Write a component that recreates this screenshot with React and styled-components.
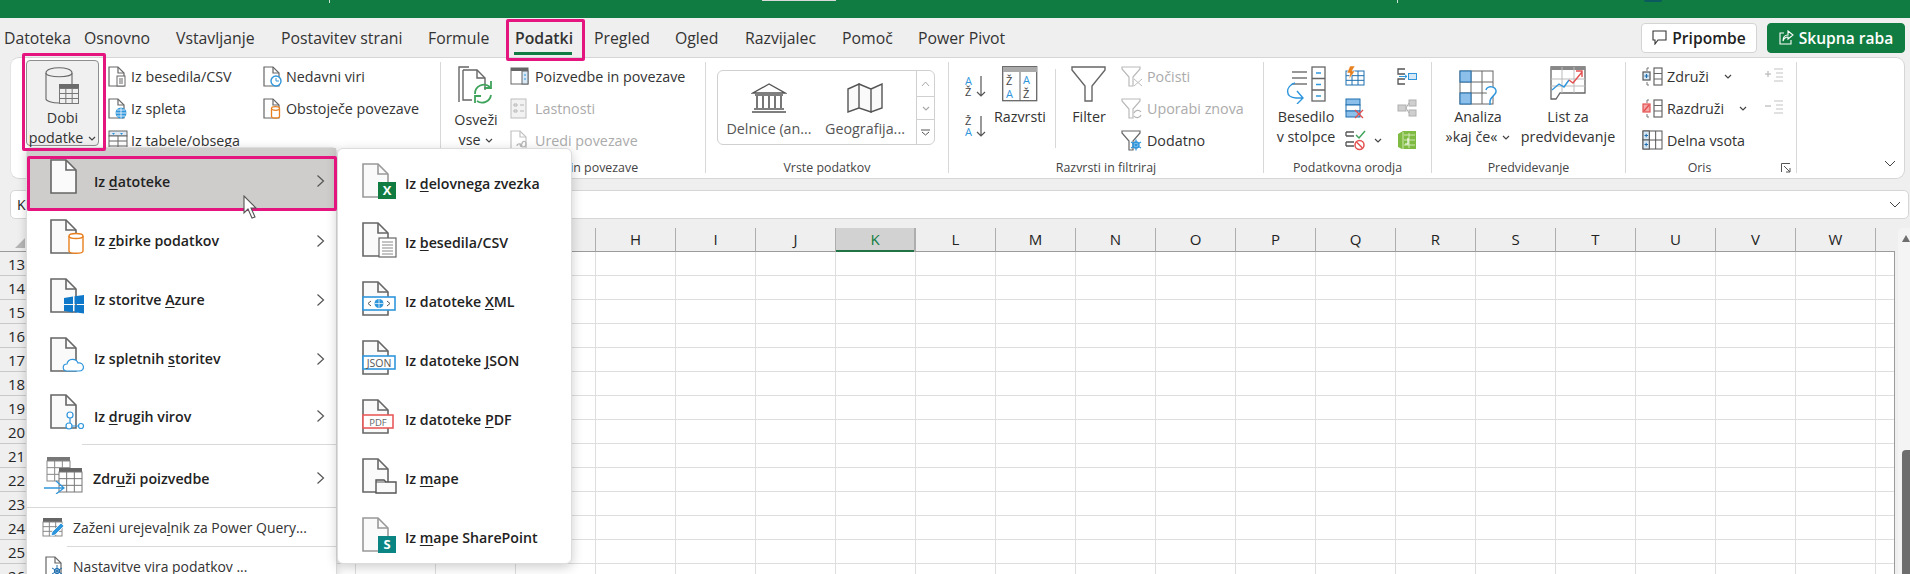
import React from "react";
import styled, { createGlobalStyle } from "styled-components";

const INK = "#262626";
const LINE = "#666";
const BLUE = "#2f96dc";
const PINK = "#e5157f";

const Global = createGlobalStyle`
  html, body { margin: 0; padding: 0; background: #efefef; overflow: hidden; }
  * { box-sizing: border-box; }
  svg { display: block; flex: none; }
`;

const Ico = ({ w, h, children }) => (
  <svg width={w} height={h} viewBox={`0 0 ${w} ${h}`} fill="none">{children}</svg>
);

const SmallDoc = ({ c = LINE }) => (
  <>
    <path d="M1 1h9l6 6v13H1z" stroke={c} strokeWidth="1.2" fill="#fff" />
    <path d="M10 1v6h6" stroke={c} strokeWidth="1.2" />
  </>
);

const BigDoc = ({ c = LINE, fill = "#fafafa" }) => (
  <>
    <path d="M1 1h15l10 10v23H1z" stroke={c} strokeWidth="1.6" fill={fill} />
    <path d="M16 1v10h10" stroke={c} strokeWidth="1.6" />
  </>
);

const Chev = ({ c = "#444" }) => (
  <svg width="8" height="5" viewBox="0 0 8 5" fill="none"><path d="M1 1l3 3 3-3" stroke={c} strokeWidth="1.2" /></svg>
);

const Grid3 = ({ x, y, w, h, cols, rows, c = "#666", fill = "#fff" }) => (
  <>
    <rect x={x} y={y} width={w} height={h} stroke={c} fill={fill} />
    {Array.from({ length: cols - 1 }, (_, i) => (
      <path key={i} d={`M${x + ((i + 1) * w) / cols} ${y}v${h}`} stroke={c} />
    ))}
    {Array.from({ length: rows - 1 }, (_, i) => (
      <path key={i} d={`M${x} ${y + ((i + 1) * h) / rows}h${w}`} stroke={c} />
    ))}
  </>
);

/* ribbon icons */
const DbIcon = () => (
  <Ico w={36} h={38}>
    <path d="M1 6v26c0 2 6 4 13 4" stroke={LINE} strokeWidth="1.1" />
    <path d="M1 6c0-7 26-7 26 0v11" stroke={LINE} strokeWidth="1.1" />
    <path d="M1 6c0 5 26 5 26 0" stroke={LINE} strokeWidth="1.1" />
    <rect x="14" y="17" width="20" height="5" fill="#6b6b6b" />
    <Grid3 x={14.5} y={21.5} w={19} h={15} cols={3} rows={3} c="#777" fill="#f0f0f0" />
  </Ico>
);
const CsvIcon = () => (
  <Ico w={18} h={21}><SmallDoc />
    <rect x="9" y="10" width="8" height="10" fill="#fff" stroke={LINE} />
    <path d="M11 13h4M11 15h4M11 17h4" stroke={LINE} />
  </Ico>
);
const WebIcon = () => (
  <Ico w={19} h={21}><SmallDoc />
    <circle cx="13" cy="15" r="5.5" fill={BLUE} />
    <path d="M7.5 15h11M13 9.5v11M9 12h8M9 18h8" stroke="#fff" strokeWidth=".8" />
  </Ico>
);
const TableIcon = () => (
  <Ico w={20} h={21}>
    <rect x="1" y="1" width="18" height="5" fill="#dfeaf5" stroke={LINE} />
    <path d="M4 3h3l-1.500 2zM12 3h3l-1.500 2z" fill={BLUE} />
    <Grid3 x={1} y={6} w={18} h={15} cols={2} rows={3} />
  </Ico>
);
const ClockIcon = () => (
  <Ico w={19} h={21}><SmallDoc />
    <circle cx="13" cy="15" r="5" fill="#fff" stroke={BLUE} strokeWidth="1.4" />
    <path d="M13 12v3h3" stroke={BLUE} />
  </Ico>
);
const ConnIcon = () => (
  <Ico w={19} h={21}><SmallDoc />
    <path d="M8.500 10.500v8c0 2 8 2 8 0v-8" stroke="#e8801f" strokeWidth="1.3" fill="#fff" />
    <ellipse cx="12.500" cy="10.500" rx="4" ry="1.800" stroke="#e8801f" strokeWidth="1.300" fill="#fff" />
  </Ico>
);
const RefreshIcon = () => (
  <Ico w={36} h={38}>
    <path d="M1 36V1h10" stroke={LINE} strokeWidth="1.4" />
    <path d="M5 4h14l8 8v12M5 4v30h9" stroke={LINE} strokeWidth="1.4" />
    <path d="M19 4v8h8" stroke={LINE} strokeWidth="1.4" />
    <path d="M17 28a9 9 0 0 1 15-7M33 29a9 9 0 0 1-14 6" stroke="#3fa35c" strokeWidth="1.800" />
    <path d="M33 15v7h-7M17 37v-7h6" stroke="#3fa35c" strokeWidth="1.800" />
  </Ico>
);
const QueriesIcon = () => (
  <Ico w={19} h={18}>
    <rect x="1" y="1" width="17" height="16" stroke={LINE} fill="#fff" />
    <rect x="1" y="1" width="17" height="3" fill={LINE} />
    <rect x="12" y="4" width="6" height="13" fill="#d6e8f6" stroke={LINE} />
    <path d="M15 7v2M15 11v2" stroke={BLUE} />
  </Ico>
);
const PropsIcon = () => (
  <Ico w={17} h={21}>
    <rect x="1" y="1" width="15" height="19" stroke="#bdbdbd" fill="#f2f2f2" />
    <path d="M4 6h3v2H4zM4 12h3v2H4zM10 7h4M10 13h4" stroke="#b5b5b5" />
  </Ico>
);
const EditLinksIcon = () => (
  <Ico w={18} h={21}><SmallDoc c="#c2c2c2" />
    <path d="M7 16c0-3 5-3 5 0M10 14c0 4 6 4 6 0s-4-3-4 0" stroke="#b8b8b8" strokeWidth="1.200" />
  </Ico>
);
const BankIcon = () => (
  <Ico w={36} h={30}>
    <path d="M18 1L2 10h32zM4 12h28M3 26h30M1 29h34" stroke="#555" strokeWidth="1.400" />
    <path d="M6 13v12M12 13v12M18 13v12M24 13v12M30 13v12" stroke="#555" strokeWidth="1.600" />
  </Ico>
);
const MapIcon = () => (
  <Ico w={36} h={30}>
    <path d="M1 6l11-5v24L1 29zM12 1l12 5v23l-12-4zM24 6l11-5v24l-11 4z" stroke="#555" strokeWidth="1.400" fill="#fafafa" />
  </Ico>
);
const Letters = ({ top, bottom, x, topC, botC }) => (
  <g fontFamily="Open Sans, sans-serif" fontSize="11">
    <text x={x} y="10" fill={topC}>{top}</text>
    <text x={x} y="21" fill={botC}>{bottom}</text>
  </g>
);
const SortAZ = () => (
  <Ico w={22} h={23}>
    <Letters top="A" bottom="Ž" x={0} topC={BLUE} botC="#444" />
    <path d="M16 1v20M12 17l4 4 4-4" stroke="#555" strokeWidth="1.200" />
  </Ico>
);
const SortZA = () => (
  <Ico w={22} h={23}>
    <Letters top="Ž" bottom="A" x={0} topC="#444" botC={BLUE} />
    <path d="M16 1v20M12 17l4 4 4-4" stroke="#555" strokeWidth="1.200" />
  </Ico>
);
const SortBig = () => (
  <Ico w={36} h={36}>
    <rect x=".7" y=".7" width="34" height="34" stroke="#666" strokeWidth="1.300" fill="#fff" />
    <rect x="1" y="1" width="34" height="5" fill="#aaa" />
    <path d="M18 6v29" stroke="#666" />
    <g fontFamily="Open Sans, sans-serif" fontSize="11">
      <text x="4" y="19" fill="#444">Ž</text>
      <text x="4" y="32" fill={BLUE}>A</text>
      <text x="21" y="18" fill={BLUE}>A</text>
      <text x="21" y="32" fill="#444">Ž</text>
    </g>
  </Ico>
);
const FilterIcon = () => (
  <Ico w={36} h={36}>
    <path d="M1 1h33v3L21 20v15h-7V20L1 4z" stroke="#666" strokeWidth="1.400" fill="#fff" />
  </Ico>
);
const FilterSm = ({ c }) => <path d="M1 1h18v2l-7 8v9h-4v-9L1 3z" stroke={c} strokeWidth="1.200" fill="#fff" />;
const FilterClear = () => (
  <Ico w={22} h={21}><FilterSm c="#b9b9b9" />
    <path d="M13 13l8 7M21 13l-8 7" stroke="#bdbdbd" />
  </Ico>
);
const FilterAgain = () => (
  <Ico w={22} h={21}><FilterSm c="#b9b9b9" />
    <path d="M13 15a4 4 0 0 1 7-1M20 17a4 4 0 0 1-7 1" stroke="#b5b5b5" strokeWidth="1.200" />
  </Ico>
);
const FilterAdv = () => (
  <Ico w={22} h={21}><FilterSm c="#666" />
    <circle cx="15" cy="15" r="3" stroke={BLUE} strokeWidth="1.400" />
    <path d="M15 9.500v11M10 12l10 6M10 18l10-6" stroke={BLUE} strokeWidth="1.200" />
  </Ico>
);
const TextColsIcon = () => (
  <Ico w={40} h={38}>
    <path d="M6 6h15M6 12h15M6 18h15" stroke="#777" strokeWidth="1.300" />
    <rect x="26" y="1" width="13" height="34" stroke="#666" strokeWidth="1.300" fill="#fff" />
    <path d="M26 12.500h13M26 24h13" stroke="#666" strokeWidth="1.300" />
    <path d="M30 7h5M30 18.500h5M30 30h5" stroke={BLUE} strokeWidth="1.300" />
    <path d="M9 17C-1 20-1 32 10 32h6M11 25l6 7-6 6" stroke={BLUE} strokeWidth="1.400" />
  </Ico>
);
const FlashIcon = () => (
  <Ico w={20} h={20}>
    <Grid3 x={1} y={5} w={18} h={14} cols={3} rows={3} c="#1f6fb0" />
    <path d="M5 0h5L7 5h3l-6 8 1-6H2z" fill="#e8801f" stroke="#fff" strokeWidth=".5" />
  </Ico>
);
const DupIcon = () => (
  <Ico w={20} h={21}>
    <rect x="1" y="1" width="14" height="6" fill="#8cc0ea" stroke="#1f6fb0" />
    <rect x="1" y="7" width="14" height="6" fill="#fff" stroke="#1f6fb0" />
    <rect x="1" y="13" width="14" height="6" fill="#8cc0ea" stroke="#1f6fb0" />
    <path d="M10 12l8 8M18 12l-8 8" stroke="#e4504f" strokeWidth="1.300" />
  </Ico>
);
const ValidIcon = () => (
  <Ico w={21} h={21}>
    <path d="M1 2h8M1 6h8M1 2v4M1 12h8M1 16h8M1 12v4" stroke="#555" strokeWidth="1.300" />
    <path d="M11 5l3 3 6-7" stroke="#3fa35c" strokeWidth="1.500" />
    <circle cx="14.500" cy="15" r="4.500" stroke="#e4504f" strokeWidth="1.500" fill="#fff" />
    <path d="M11.500 12l6 6" stroke="#e4504f" strokeWidth="1.500" />
  </Ico>
);
const ConsolidateIcon = () => (
  <Ico w={20} h={17}>
    <path d="M8 1H1v5h7M8 11H1v5h7" stroke="#555" strokeWidth="1.300" />
    <path d="M2 8.500h8M7 6l3 2.500L7 11" stroke={BLUE} />
    <rect x="11.500" y="5.500" width="8" height="6" fill="#d6e8f6" stroke={BLUE} />
  </Ico>
);
const RelationsIcon = () => (
  <Ico w={20} h={18}>
    <rect x="1" y="6" width="8" height="6" fill="#cfcfcf" stroke="#b0b0b0" />
    <rect x="12" y="1" width="7" height="6" fill="#cfcfcf" stroke="#b0b0b0" />
    <rect x="12" y="11" width="7" height="6" fill="#cfcfcf" stroke="#b0b0b0" />
    <path d="M9 9l3-5M9 9l3 5" stroke="#b0b0b0" />
  </Ico>
);
const ModelIcon = () => (
  <Ico w={20} h={20}>
    <path d="M1 4l5-3h13v18H5l-4-2z" fill="#7fba42" />
    <path d="M7 5h11M7 10h11M7 15h11M12 3v15M6 2v17" stroke="#d9eebf" strokeWidth=".9" />
    <path d="M8 14h3v-6" stroke="#fff" strokeWidth="1.200" />
  </Ico>
);
const WhatIfIcon = () => (
  <Ico w={39} h={36}>
    <Grid3 x={1} y={1} w={33} h={33} cols={3} rows={3} c="#666" />
    <rect x="1" y="1" width="11" height="11" fill="#8cc0ea" stroke="#1f6fb0" />
    <rect x="1" y="23" width="11" height="11" fill="#8cc0ea" stroke="#1f6fb0" />
    <path d="M27 20c1-5 11-4 10 2-1 4-5 4-6 9v4" stroke={BLUE} strokeWidth="1.500" fill="#fff" />
  </Ico>
);
const ForecastIcon = () => (
  <Ico w={36} h={34}>
    <path d="M1 1h34v26H10l-4 6H1z" stroke="#666" strokeWidth="1.300" fill="#fff" />
    <rect x="1" y="1" width="34" height="3" fill="#888" />
    <path d="M1 13h34M1 20h34M12 1v26M24 1v26" stroke="#bbb" />
    <path d="M2 24l7-6 5 3 5-7" stroke={BLUE} strokeWidth="1.400" />
    <path d="M19 14l4 3 9-11M26 5h6v6" stroke="#e4504f" strokeWidth="1.400" />
  </Ico>
);
const GroupSm = ({ red }) => (
  <Ico w={21} h={19}>
    <rect x="1" y="5" width="7" height="8" fill={red ? "#f3a8a8" : "#d6e8f6"} stroke={red ? "#e4504f" : "#555"} strokeWidth="1.200" />
    {red
      ? <path d="M2 12l5-6" stroke="#e4504f" strokeWidth="1.400" />
      : <path d="M2.500 9h4M4.500 7v4" stroke="#1f6fb0" strokeWidth="1.200" />}
    <path d="M7 1H5v3M7 18H5v-3" stroke="#777" />
    <rect x="12" y="1" width="8" height="17" stroke="#666" strokeWidth="1.200" fill="#fff" />
    <path d="M12 6.500h8M12 12h8" stroke="#666" />
  </Ico>
);
const SubtotalIcon = () => (
  <Ico w={21} h={20}>
    <Grid3 x={1} y={1} w={19} h={18} cols={3} rows={2} c="#555" />
    <rect x="1" y="1" width="6.300" height="9" fill="#d6e8f6" stroke="#555" />
    <rect x="1" y="10" width="6.300" height="9" fill="#d6e8f6" stroke="#555" />
    <path d="M2.500 5.500h3.500M4.200 3.800v3.500M2.500 14.500h3.500M4.200 12.800v3.500" stroke="#1f6fb0" />
  </Ico>
);
const OutlineSm = ({ plus }) => (
  <Ico w={20} h={16}>
    <path d="M1 6h6" stroke="#bdbdbd" strokeWidth="1.300" />
    {plus && <path d="M4 3v6" stroke="#bdbdbd" strokeWidth="1.300" />}
    <path d="M10 1h9M12 5h7M12 9h7M10 13h9" stroke="#c4c4c4" strokeWidth="1.200" />
  </Ico>
);
const CommentIcon = () => (
  <Ico w={15} h={15}><path d="M1 1h13v9H6l-3 4v-4H1z" stroke="#333" strokeWidth="1.100" /></Ico>
);
const ShareIcon = () => (
  <Ico w={15} h={15}>
    <path d="M5 3H1v11h11v-4" stroke="#fff" strokeWidth="1.100" />
    <path d="M9 1l5 4-5 4V7C7 7 5 8 4 11c0-4 2-6 5-6z" stroke="#fff" strokeWidth="1.100" />
  </Ico>
);

/* menu icons */
const MenuSlot = ({ children }) => <Ico w={36} h={37}>{children}</Ico>;
const M = {
  file: () => <MenuSlot><BigDoc /></MenuSlot>,
  db: () => (
    <MenuSlot><BigDoc />
      <path d="M19 17v15c0 3 14 3 14 0V17" stroke="#e8801f" strokeWidth="1.400" fill="#fff" />
      <ellipse cx="26" cy="17" rx="7" ry="2.500" stroke="#e8801f" strokeWidth="1.400" fill="#fff" />
    </MenuSlot>
  ),
  azure: () => (
    <MenuSlot><BigDoc />
      <path d="M14 20l9-1.500V26h-9zM24.500 18.200L34 17v9h-9.500zM14 27h9v7.500l-9-1.500zM24.500 27H34v8.500l-9.500-1.300z" fill="#0f78c9" />
    </MenuSlot>
  ),
  cloud: () => (
    <MenuSlot><BigDoc />
      <path d="M17 34c-5 0-5-7 0-7 1-6 9-6 11-1 6-1 8 8 1 8z" stroke={BLUE} strokeWidth="1.200" fill="#fff" />
    </MenuSlot>
  ),
  other: () => (
    <MenuSlot><BigDoc />
      <circle cx="20" cy="21" r="3" stroke={BLUE} strokeWidth="1.200" fill="#fff" />
      <circle cx="19" cy="32" r="3" stroke={BLUE} strokeWidth="1.200" fill="#fff" />
      <circle cx="31" cy="32" r="2.500" stroke={BLUE} strokeWidth="1.200" fill="#fff" />
      <path d="M20 24v5M22 32h6.500" stroke={BLUE} strokeWidth="1.200" />
    </MenuSlot>
  ),
  combine: () => (
    <Ico w={40} h={38}>
      <rect x="3" y="1" width="23" height="4" fill="#777" />
      <Grid3 x={3} y={5} w={23} h={20} cols={3} rows={3} c="#888" />
      <rect x="15" y="12" width="23" height="4" fill="#666" />
      <Grid3 x={15} y={16} w={23} h={20} cols={3} rows={3} c="#777" />
      <path d="M0 32h19M12 25l8 7-8 6" stroke={BLUE} strokeWidth="1.300" fill="none" />
    </Ico>
  ),
  xlsx: () => (
    <MenuSlot><BigDoc c="#999" />
      <rect x="16" y="19" width="18" height="17" fill="#107c41" />
      <text x="25" y="32" fill="#fff" fontSize="13" fontWeight="700" textAnchor="middle" fontFamily="Open Sans, sans-serif">X</text>
    </MenuSlot>
  ),
  csv: () => (
    <MenuSlot><BigDoc />
      <rect x="17" y="16" width="17" height="19" fill="#fff" stroke={LINE} strokeWidth="1.200" />
      <path d="M20 20h11M20 23h11M20 26h11M20 29h11M20 32h11" stroke="#888" />
    </MenuSlot>
  ),
  xml: () => (
    <MenuSlot><BigDoc />
      <rect x="1" y="16" width="32" height="13" fill="#fff" stroke={BLUE} strokeWidth="1.600" />
      <circle cx="17" cy="22.500" r="4.500" fill={BLUE} />
      <path d="M12.500 22.500h9M17 18v9" stroke="#fff" strokeWidth=".7" />
      <path d="M9 20l-3 2.500L9 25M25 20l3 2.500L25 25" stroke="#555" />
    </MenuSlot>
  ),
  json: () => (
    <MenuSlot><BigDoc />
      <rect x="1" y="16" width="32" height="13" fill="#fff" stroke={BLUE} strokeWidth="1.600" />
      <text x="17" y="27" fill="#555" fontSize="10.500" textAnchor="middle" fontFamily="Open Sans, sans-serif">JSON</text>
    </MenuSlot>
  ),
  pdf: () => (
    <MenuSlot><BigDoc />
      <rect x="1" y="16" width="30" height="13" fill="#fff" stroke="#ea5a5a" strokeWidth="1.600" />
      <text x="16" y="26.500" fill="#666" fontSize="9.500" textAnchor="middle" fontFamily="Open Sans, sans-serif">PDF</text>
    </MenuSlot>
  ),
  folder: () => (
    <MenuSlot><BigDoc />
      <path d="M14 35V22h8l2 2h10v11z" fill="#fafafa" stroke="#555" strokeWidth="1.400" />
      <path d="M14 24h10" stroke="#555" />
    </MenuSlot>
  ),
  sp: () => (
    <MenuSlot><BigDoc c="#999" />
      <rect x="16" y="19" width="18" height="17" fill="#0b8484" />
      <text x="25" y="32" fill="#fff" fontSize="13" fontWeight="700" textAnchor="middle" fontFamily="Open Sans, sans-serif">S</text>
    </MenuSlot>
  ),
};
const EditorIcon = () => (
  <Ico w={22} h={20}>
    <rect x="1" y="1" width="19" height="4" fill="#666" />
    <Grid3 x={1} y={5} w={19} h={14} cols={3} rows={3} c="#888" />
    <path d="M9 19l1-4 9-9 3 3-9 9z" fill={BLUE} stroke="#fff" strokeWidth=".8" />
  </Ico>
);
const SourceIcon = () => (
  <Ico w={18} h={21}><SmallDoc />
    <circle cx="12" cy="15" r="2.500" stroke="#1f6fb0" strokeWidth="1.200" fill="#fff" />
    <path d="M12 9v12M7 12l10 6M7 18l10-6" stroke="#1f6fb0" />
  </Ico>
);
const MenuChev = () => (
  <svg width="9" height="14" viewBox="0 0 9 14" fill="none"><path d="M1.500 1.500l6 5.500-6 5.500" stroke="#555" strokeWidth="1.200" /></svg>
);

const Page = styled.div`
  position: relative;
  width: 1910px;
  height: 574px;
  overflow: hidden;
  background: #efefef;
  font-family: "Open Sans", "Noto Sans", sans-serif;
  color: ${INK};
  display: flex;
  flex-direction: column;
`;

const TitleBar = styled.div`
  height: 18px;
  background: #107c41;
  display: flex;
  align-items: flex-start;
  flex: none;
`;
const Tick = styled.span`
  width: ${p => p.$w}px;
  height: ${p => p.$h}px;
  margin-left: ${p => p.$gap}px;
  background: ${p => p.$c};
  border-radius: ${p => p.$round ? "0 0 6px 6px" : "0"};
`;

const TabRow = styled.nav`
  height: 39px;
  padding: 0 5px 0 4px;
  display: flex;
  align-items: center;
  flex: none;
  font-size: 15.800px;
`;
const Tab = styled.div`
  position: relative;
  width: ${p => p.$w}px;
  color: #333;
  font-weight: ${p => p.$on ? 600 : 400};
  white-space: nowrap;
  &::after {
    content: "";
    display: ${p => p.$on ? "block" : "none"};
    position: absolute;
    left: -1px;
    top: 25px;
    width: 58px;
    height: 3px;
    background: #107c41;
  }
`;
const Actions = styled.div`
  margin-left: auto;
  display: flex;
  gap: 10px;
`;
const Btn = styled.button`
  height: 30px;
  width: ${p => p.$w}px;
  border: 1px solid ${p => p.$primary ? "#107c41" : "#d4d4d4"};
  border-radius: 4px;
  background: ${p => p.$primary ? "#107c41" : "#fff"};
  color: ${p => p.$primary ? "#fff" : "#222"};
  font: 600 15.600px "Open Sans", sans-serif;
  display: flex;
  align-items: center;
  justify-content: center;
  gap: 5px;
  padding: 0;
`;

const Ribbon = styled.div`
  height: 122px;
  margin: 0 5px 0 10px;
  background: #fff;
  border: 1px solid #d6d6d6;
  border-left-color: #e4e4e4;
  border-radius: 9px;
  display: flex;
  padding-top: 4px;
  flex: none;
  font-size: 14.300px;
  color: #333;
`;
const Group = styled.section`
  width: ${p => p.$w}px;
  height: 111px;
  flex: none;
  border-right: 1px solid #d8d8d8;
  display: flex;
  flex-direction: column;
`;
const GroupBody = styled.div`
  height: 96px;
  display: flex;
  align-items: flex-start;
  padding-left: ${p => p.$pad || 0}px;
  flex: none;
`;
const GroupLabel = styled.div`
  height: 20px;
  line-height: 20px;
  margin-bottom: -5px;
  text-align: center;
  font-size: 12.400px;
  color: #444;
  position: relative;
  padding-right: ${p => p.$shift || 0}px;
`;
const Launcher = styled.span`
  position: absolute;
  right: 5px;
  top: 5px;
`;
const Column = styled.div`
  display: flex;
  flex-direction: column;
  margin-top: -2px;
  margin-left: ${p => p.$ml || 0}px;
  width: ${p => p.$w ? `${p.$w}px` : "auto"};
  flex: none;
`;
const SmallRow = styled.div`
  height: 32px;
  display: flex;
  align-items: center;
  white-space: nowrap;
  color: ${p => p.$off ? "#ababab" : "inherit"};
`;
const SmallIcon = styled.span`
  width: ${p => p.$w || 23}px;
  flex: none;
`;
const RowChev = styled.span`
  margin-left: ${p => p.$ml}px;
`;
const Big = styled.div`
  width: ${p => p.$w}px;
  margin-left: ${p => p.$ml || 0}px;
  display: flex;
  flex-direction: column;
  align-items: center;
  flex: none;
`;
const BigSlot = styled.div`
  height: ${p => p.$h || 45}px;
  padding-top: ${p => p.$top || 4}px;
  flex: none;
`;
const BigText = styled.div`
  line-height: 20px;
  white-space: nowrap;
  display: flex;
  align-items: center;
  gap: ${p => p.$gap || 5}px;
  flex: none;
`;
const GetData = styled.div`
  width: 73px;
  height: 86px;
  margin-top: -2px;
  margin-left: 15px;
  margin-right: 9px;
  background: #f0f0f0;
  border: 1px solid #8e8e8e;
  border-radius: 4px;
  display: flex;
  flex-direction: column;
  align-items: center;
  padding-top: 2px;
  flex: none;
`;
const Gallery = styled.div`
  width: 218px;
  height: 75px;
  margin: 8px 0 0 11px;
  border: 1px solid #d0d0d0;
  border-radius: 6px;
  display: flex;
  flex: none;
  color: #555;
`;
const GalleryItems = styled.div`
  flex: 1;
  display: flex;
`;
const GalleryItem = styled.div`
  width: ${p => p.$w}px;
  margin-left: ${p => p.$ml}px;
  display: flex;
  flex-direction: column;
  align-items: center;
  padding-top: 12px;
  gap: 6px;
  white-space: nowrap;
`;
const GalleryScroll = styled.div`
  width: 18px;
  border-left: 1px solid #d0d0d0;
  display: flex;
  flex-direction: column;
`;
const ScrollBtn = styled.div`
  height: ${p => p.$h}px;
  display: flex;
  align-items: center;
  justify-content: center;
  border-bottom: ${p => p.$line ? "1px solid #d0d0d0" : "none"};
`;
const SortStack = styled.div`
  width: 22px;
  padding-top: 4px;
  flex: none;
`;
const SortRow = styled.div`
  height: 40px;
  display: flex;
  align-items: center;
`;
const Divider = styled.div`
  width: 1px;
  height: 79px;
  margin-top: 7px;
  margin-left: ${p => p.$ml}px;
  background: #d8d8d8;
  flex: none;
`;
const Collapse = styled.div`
  flex: 1;
  display: flex;
  justify-content: flex-end;
  padding: 98px 8px 0 0;
`;

const FormulaBar = styled.div`
  height: 29px;
  margin: 11px 1px 9px 10px;
  background: #fff;
  border: 1px solid #d6d6d6;
  border-radius: 5px;
  display: flex;
  align-items: center;
  justify-content: space-between;
  padding: 0 7px 0 6px;
  font-size: 14px;
  flex: none;
`;

const Sheet = styled.div`
  flex: 1;
  display: flex;
  min-height: 0;
`;
const SheetMain = styled.div`
  width: 1895px;
  flex: none;
  display: flex;
  flex-direction: column;
`;
const HeaderRow = styled.div`
  height: 24px;
  display: flex;
  flex: none;
  border-bottom: 1px solid #9b9b9b;
`;
const Corner = styled.div`
  width: 35px;
  display: flex;
  align-items: flex-end;
  justify-content: flex-end;
  padding: 0 10px 3px 0;
`;
const ColHead = styled.div`
  width: ${p => p.$w || 80}px;
  height: ${p => p.$on ? 24 : 23}px;
  flex: none;
  text-align: center;
  font-size: 15px;
  line-height: 23px;
  border-left: 1px solid #aeaeae;
  background: ${p => p.$on ? "#d2d2d2" : "transparent"};
  border-right: ${p => p.$on ? "1px solid #aeaeae" : "none"};
  box-shadow: ${p => p.$on ? "inset 0 -2px 0 #217346" : "none"};
  color: ${p => p.$on ? "#107c41" : "#222"};
  position: relative;
`;
const SheetBody = styled.div`
  flex: 1;
  background: #fff;
  overflow: hidden;
  border-right: 1px solid #9b9b9b;
`;
const SheetRow = styled.div`
  height: 24px;
  display: flex;
`;
const RowHead = styled.div`
  width: 35px;
  flex: none;
  background: #efefef;
  border-bottom: 1px solid #c9c9c9;
  font-size: 15px;
  line-height: 25px;
  padding-left: 8px;
`;
const Cell = styled.div`
  width: ${p => p.$w || 80}px;
  flex: none;
  border-left: 1px solid #dedede;
  border-bottom: 1px solid #dedede;
`;
const ScrollTrack = styled.div`
  width: 12px;
  margin-left: 3px;
  flex: none;
  background: #f4f4f4;
  border-radius: 5px 0 0 0;
  display: flex;
  flex-direction: column;
  padding: 7px 0 0 4px;
`;
const ThumbArrow = styled.div`
  width: 0;
  height: 0;
  border-left: 4px solid transparent;
  border-right: 4px solid transparent;
  border-bottom: 7px solid #6e6e6e;
`;
const Thumb = styled.div`
  flex: 1;
  margin-top: 208px;
  background: #6e6e6e;
  border-radius: 4px 0 0 0;
`;

const Menu = styled.div`
  position: absolute;
  left: 26px;
  top: 147px;
  width: 311px;
  height: 440px;
  background: #fff;
  border: 1px solid #dcdcdc;
  border-radius: 5px 5px 0 0;
  box-shadow: 0 2px 10px rgba(0, 0, 0, .18);
  z-index: 2;
`;
const MenuRow = styled.div`
  height: ${p => p.$h}px;
  padding: ${p => p.$top || 0}px 11px 0 23px;
  display: flex;
  align-items: center;
  background: ${p => p.$on ? "#cecdcb" : "transparent"};
`;
const MenuIcon = styled.span`
  width: 44px;
  flex: none;
  margin-left: ${p => p.$ml || 0}px;
  margin-top: -7px;
`;
const MenuLabel = styled.span`
  flex: 1;
  font-weight: 600;
  font-size: 14.200px;
  color: #222;
  white-space: nowrap;
  margin-left: ${p => p.$ml || 0}px;
  u { text-underline-offset: 2px; }
`;
const MenuSep = styled.div`
  height: 1px;
  margin-left: ${p => p.$ml}px;
  background: #d9d9d9;
`;
const PlainRow = styled.div`
  height: 38px;
  display: flex;
  align-items: center;
  padding-left: ${p => p.$pad}px;
  white-space: nowrap;
  font-size: 13.950px;
  color: #333;
  u { text-underline-offset: 2px; }
`;
const PlainIcon = styled.span`
  width: ${p => p.$w}px;
  flex: none;
`;
const SubMenu = styled.div`
  position: absolute;
  left: 337px;
  top: 148px;
  width: 235px;
  height: 416px;
  padding-top: 5px;
  background: #fff;
  border: 1px solid #dcdcdc;
  border-radius: 6px;
  box-shadow: 0 3px 12px rgba(0, 0, 0, .2);
  z-index: 3;
`;
const SubRow = styled.div`
  height: 59px;
  display: flex;
  align-items: center;
  padding-left: 24px;
  svg { margin-top: -5px; }
`;
const SubLabel = styled(MenuLabel)`
  margin-left: 7px;
`;
const Callout = styled.div`
  position: absolute;
  left: ${p => p.$x}px;
  top: ${p => p.$y}px;
  width: ${p => p.$w}px;
  height: ${p => p.$h}px;
  border: 3px solid ${PINK};
  border-radius: 2px;
  z-index: 4;
  pointer-events: none;
`;
const Cursor = styled.div`
  position: absolute;
  left: 243px;
  top: 195px;
  z-index: 5;
`;

const TABS = [
  ["Datoteka", 80], ["Osnovno", 92], ["Vstavljanje", 105], ["Postavitev strani", 147], ["Formule", 87],
  ["Podatki", 79, true], ["Pregled", 81], ["Ogled", 70], ["Razvijalec", 97], ["Pomoč", 76], ["Power Pivot", 90],
];
const COLS = "ABCDEFGHIJKLMNOPQRSTUVW".split("");
const ROWS = Array.from({ length: 14 }, (_, i) => 13 + i);

const MENU = [
  [M.file, <>Iz <u>d</u>atoteke</>, 63, 3, true],
  [M.db, <>Iz <u>z</u>birke podatkov</>, 59],
  [M.azure, <>Iz storitve <u>A</u>zure</>, 59],
  [M.cloud, <>Iz spletnih <u>s</u>toritev</>, 59],
  [M.other, <>Iz <u>d</u>rugih virov</>, 56],
];
const SUB = [
  [M.xlsx, <>Iz <u>d</u>elovnega zvezka</>],
  [M.csv, <>Iz <u>b</u>esedila/CSV</>],
  [M.xml, <>Iz datoteke <u>X</u>ML</>],
  [M.json, <>Iz datoteke <u>J</u>SON</>],
  [M.pdf, <>Iz datoteke <u>P</u>DF</>],
  [M.folder, <>Iz <u>m</u>ape</>],
  [M.sp, <>Iz <u>m</u>ape SharePoint</>],
];

const Small = ({ icon, slot, off, children, chev }) => (
  <SmallRow $off={off}>
    <SmallIcon $w={slot}>{icon}</SmallIcon>
    {children}
    {chev && <RowChev $ml={chev}><Chev /></RowChev>}
  </SmallRow>
);

export default function App() {
  return (
    <Page>
      <Global />
      <TitleBar>
        <Tick $w={1} $h={3} $gap={329} $c="#cfe3d8" />
        <Tick $w={74} $h={1} $gap={432} $c="#d9d9d9" />
        <Tick $w={1} $h={3} $gap={561} $c="#cfe3d8" />
        <Tick $w={18} $h={2} $gap={246} $c="#0b5a5f" $round />
      </TitleBar>

      <TabRow>
        {TABS.map(([name, w, on]) => <Tab key={name} $w={w} $on={on}>{name}</Tab>)}
        <Actions>
          <Btn $w={116}><CommentIcon />Pripombe</Btn>
          <Btn $w={138} $primary><ShareIcon />Skupna raba</Btn>
        </Actions>
      </TabRow>

      <Ribbon>
        <Group $w={430}>
          <GroupBody>
            <GetData>
              <BigSlot $h={45}><DbIcon /></BigSlot>
              <BigText>Dobi</BigText>
              <BigText>podatke <Chev /></BigText>
            </GetData>
            <Column $w={155}>
              <Small icon={<CsvIcon />}>Iz besedila/CSV</Small>
              <Small icon={<WebIcon />}>Iz spleta</Small>
              <Small icon={<TableIcon />}>Iz tabele/obsega</Small>
            </Column>
            <Column>
              <Small icon={<ClockIcon />}>Nedavni viri</Small>
              <Small icon={<ConnIcon />}>Obstoječe povezave</Small>
            </Column>
          </GroupBody>
        </Group>

        <Group $w={265}>
          <GroupBody $pad={5}>
            <Big $w={60}>
              <BigSlot $h={48}><RefreshIcon /></BigSlot>
              <BigText>Osveži</BigText>
              <BigText>vse <Chev /></BigText>
            </Big>
            <Column $ml={4}>
              <Small slot={25} icon={<QueriesIcon />}>Poizvedbe in povezave</Small>
              <Small slot={25} off icon={<PropsIcon />}>Lastnosti</Small>
              <Small slot={25} off icon={<EditLinksIcon />}>Uredi povezave</Small>
            </Column>
          </GroupBody>
          <GroupLabel>Poizvedbe in povezave</GroupLabel>
        </Group>

        <Group $w={243}>
          <GroupBody>
            <Gallery>
              <GalleryItems>
                <GalleryItem $w={86} $ml={8}><BankIcon />Delnice (an...</GalleryItem>
                <GalleryItem $w={82} $ml={12}><MapIcon />Geografija...</GalleryItem>
              </GalleryItems>
              <GalleryScroll>
                <ScrollBtn $h={26} $line><svg width="9" height="6" viewBox="0 0 9 6" fill="none"><path d="M1 5l3.500-4 3.500 4" stroke="#aaa" /></svg></ScrollBtn>
                <ScrollBtn $h={23} $line><Chev c="#aaa" /></ScrollBtn>
                <ScrollBtn $h={24}><svg width="9" height="7" viewBox="0 0 9 7" fill="none"><path d="M0 1h9M1 3l3.500 3 3.500-3" stroke="#555" /></svg></ScrollBtn>
              </GalleryScroll>
            </Gallery>
          </GroupBody>
          <GroupLabel>Vrste podatkov</GroupLabel>
        </Group>

        <Group $w={315}>
          <GroupBody $pad={16}>
            <SortStack>
              <SortRow><SortAZ /></SortRow>
              <SortRow><SortZA /></SortRow>
            </SortStack>
            <Big $w={60} $ml={3}>
              <BigSlot><SortBig /></BigSlot>
              <BigText>Razvrsti</BigText>
            </Big>
            <Divider $ml={5} />
            <Big $w={50} $ml={8}>
              <BigSlot><FilterIcon /></BigSlot>
              <BigText>Filter</BigText>
            </Big>
            <Column $ml={7}>
              <Small slot={26} off icon={<FilterClear />}>Počisti</Small>
              <Small slot={26} off icon={<FilterAgain />}>Uporabi znova</Small>
              <Small slot={26} icon={<FilterAdv />}>Dodatno</Small>
            </Column>
          </GroupBody>
          <GroupLabel>Razvrsti in filtriraj</GroupLabel>
        </Group>

        <Group $w={168}>
          <GroupBody $pad={9}>
            <Big $w={66}>
              <BigSlot><TextColsIcon /></BigSlot>
              <BigText>Besedilo</BigText>
              <BigText>v stolpce</BigText>
            </Big>
            <Column $ml={6} $w={52}>
              <Small icon={<FlashIcon />} />
              <Small icon={<DupIcon />} />
              <Small slot={29} icon={<ValidIcon />}><Chev /></Small>
            </Column>
            <Column>
              <Small icon={<ConsolidateIcon />} />
              <Small icon={<RelationsIcon />} />
              <Small icon={<ModelIcon />} />
            </Column>
          </GroupBody>
          <GroupLabel>Podatkovna orodja</GroupLabel>
        </Group>

        <Group $w={194}>
          <GroupBody $pad={1}>
            <Big $w={90}>
              <BigSlot $top={8}><WhatIfIcon /></BigSlot>
              <BigText>Analiza</BigText>
              <BigText>»kaj če« <Chev /></BigText>
            </Big>
            <Big $w={90}>
              <BigSlot><ForecastIcon /></BigSlot>
              <BigText>List za</BigText>
              <BigText>predvidevanje</BigText>
            </Big>
          </GroupBody>
          <GroupLabel>Predvidevanje</GroupLabel>
        </Group>

        <Group $w={171}>
          <GroupBody $pad={16}>
            <Column $w={122}>
              <Small slot={25} icon={<GroupSm />} chev={15}>Združi</Small>
              <Small slot={25} icon={<GroupSm red />} chev={15}>Razdruži</Small>
              <Small slot={25} icon={<SubtotalIcon />}>Delna vsota</Small>
            </Column>
            <Column>
              <Small icon={<OutlineSm plus />} />
              <Small icon={<OutlineSm />} />
            </Column>
          </GroupBody>
          <GroupLabel $shift={23}>
            Oris
            <Launcher>
              <svg width="10" height="10" viewBox="0 0 10 10" fill="none"><path d="M.5 9V.5H9M3 3l6 6M5 9h4V5" stroke="#555" /></svg>
            </Launcher>
          </GroupLabel>
        </Group>

        <Collapse>
          <svg width="12" height="7" viewBox="0 0 12 7" fill="none"><path d="M1 1l5 5 5-5" stroke="#444" /></svg>
        </Collapse>
      </Ribbon>

      <FormulaBar>
        K
        <svg width="12" height="7" viewBox="0 0 12 7" fill="none"><path d="M1 1l5 5 5-5" stroke="#444" /></svg>
      </FormulaBar>

      <Sheet>
        <SheetMain>
          <HeaderRow>
            <Corner>
              <svg width="10" height="10" viewBox="0 0 10 10"><path d="M10 0v10H0z" fill="#b5b5b5" /></svg>
            </Corner>
            {COLS.map(c => <ColHead key={c} $on={c === "K"}>{c}</ColHead>)}
            <ColHead $w={19} />
          </HeaderRow>
          <SheetBody>
            {ROWS.map(r => (
              <SheetRow key={r}>
                <RowHead>{r}</RowHead>
                {COLS.map(c => <Cell key={c} />)}
                <Cell $w={19} />
              </SheetRow>
            ))}
          </SheetBody>
        </SheetMain>
        <ScrollTrack>
          <ThumbArrow />
          <Thumb />
        </ScrollTrack>
      </Sheet>

      <Menu>
        {MENU.map(([Icon, label, h, top, on], i) => (
          <MenuRow key={i} $h={h} $top={top} $on={on}>
            <MenuIcon><Icon /></MenuIcon>
            <MenuLabel>{label}</MenuLabel>
            <MenuChev />
          </MenuRow>
        ))}
        <MenuSep $ml={55} />
        <MenuRow $h={62} $top={4}>
          <MenuIcon $ml={-6}><M.combine /></MenuIcon>
          <MenuLabel $ml={5}>Zdr<u>u</u>ži poizvedbe</MenuLabel>
          <MenuChev />
        </MenuRow>
        <MenuSep $ml={0} />
        <PlainRow $pad={15}>
          <PlainIcon $w={31}><EditorIcon /></PlainIcon>
          <span>Zaženi urejeva<u>l</u>nik za Power Query...</span>
        </PlainRow>
        <MenuSep $ml={40} />
        <PlainRow $pad={18}>
          <PlainIcon $w={28}><SourceIcon /></PlainIcon>
          <span><u>N</u>astavitve vira podatkov ...</span>
        </PlainRow>
      </Menu>

      <SubMenu>
        {SUB.map(([Icon, label], i) => (
          <SubRow key={i}>
            <Icon />
            <SubLabel>{label}</SubLabel>
          </SubRow>
        ))}
      </SubMenu>

      <Callout $x={506} $y={19} $w={79} $h={42} />
      <Callout $x={22} $y={53} $w={84} $h={98} />
      <Callout $x={27} $y={156} $w={310} $h={55} />
      <Cursor>
        <svg width="14" height="24" viewBox="0 0 14 24">
          <path d="M1 1v17l4-4 4 9 3-1-4-9h5z" fill="#fff" stroke="#555" strokeWidth="1.100" />
        </svg>
      </Cursor>
    </Page>
  );
}
